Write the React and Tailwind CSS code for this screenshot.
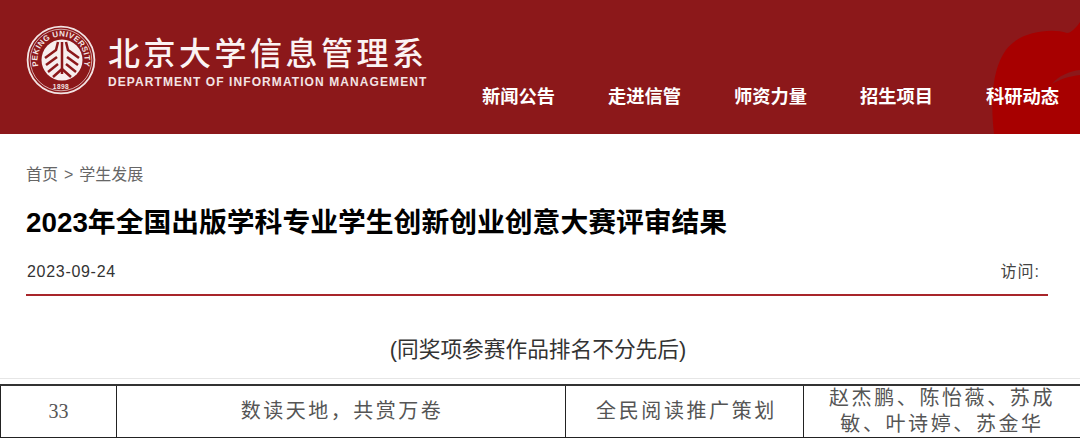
import React from 'react';

const cjk = { fontFamily: '"Liberation Sans", "Noto Sans CJK SC", sans-serif' };
const tableFont = { fontFamily: '"Liberation Serif", "Noto Sans CJK SC", serif' };

const navItems = ['新闻公告', '走进信管', '师资力量', '招生项目', '科研动态'];

function Seal() {
  return (
    <svg width="70" height="70" viewBox="0 0 70 70" className="shrink-0">
      <defs>
        <path id="sealTop" d="M 14.65 46.75 A 23.5 23.5 0 1 1 55.35 46.75" />
      </defs>
      <circle cx="35" cy="35" r="33.4" fill="none" stroke="#f3e4e4" strokeWidth="1.8" />
      <circle cx="35" cy="35" r="30.8" fill="none" stroke="#f3e4e4" strokeWidth="0.7" />
      <circle cx="36" cy="35" r="20.5" fill="#f7eeee" />
      <text fill="#f3e4e4" fontSize="8" fontWeight="700" letterSpacing="0.3" fontFamily="Liberation Sans, sans-serif">
        <textPath href="#sealTop" startOffset="50%" textAnchor="middle">PEKING UNIVERSITY</textPath>
      </text>
      <text x="35" y="64" textAnchor="middle" fill="#f3e4e4" fontSize="6.6" fontWeight="700" letterSpacing="0.4" fontFamily="Liberation Sans, sans-serif">1898</text>
      <g stroke="#8c181a" strokeWidth="2.5" fill="none">
        <path d="M36 17 V49" />
        <path d="M32 17 L30 25 L19 33" />
        <path d="M40 17 L42 25 L53 33" />
        <path d="M31 32 L20 40" />
        <path d="M41 32 L52 40" />
        <path d="M32 39 L22 47" />
        <path d="M40 39 L50 47" />
        <path d="M27 52 L36 44 L45 52" />
      </g>
    </svg>
  );
}

export default function App() {
  return (
    <div className="w-[1080px] h-[438px] overflow-hidden bg-white" style={cjk}>
      {/* Header */}
      <header className="relative h-[134px] bg-[#8c181a] flex overflow-hidden">
        <svg width="90" height="134" viewBox="0 0 90 134" className="absolute right-0 top-0">
          <path d="M4 134 C0 100 2 58 24 42 C36 32 62 28 77 33 C81 33 86 28 90 22 V134 Z" fill="#a70000" />
          <path d="M62 84 C68 76 80 71 90 70 L90 75 C80 76 70 79 62 84 Z" fill="#8c181a" />
        </svg>

        <div className="pl-[26px] pt-[25px] shrink-0">
          <Seal />
        </div>
        <div className="pl-[12px] pt-[36px] w-[341px] shrink-0">
          <div className="text-[32px] leading-[36px] tracking-[3.5px] font-medium text-[#fbf3f3] whitespace-nowrap">北京大学信息管理系</div>
          <div className="text-[12px] leading-[14px] mt-[3px] font-bold tracking-[1.09px] text-[#f3e4e4] whitespace-nowrap">DEPARTMENT OF INFORMATION MANAGEMENT</div>
        </div>
        <nav className="relative flex gap-[53px] pl-[45px] pt-[85px]">
          {navItems.map((item) => (
            <a key={item} className="text-[18.25px] leading-[24px] font-bold text-white whitespace-nowrap">{item}</a>
          ))}
        </nav>
      </header>

      {/* Article head */}
      <div className="pl-[26px] pr-[32px]">
        <div className="pt-[31px] text-[16px] leading-[20px] text-[#666666] flex">
          <span>首页</span>
          <span className="px-[6px]">&gt;</span>
          <span>学生发展</span>
        </div>
        <h1 className="mt-[20px] text-[27.8px] leading-[36px] font-bold text-black whitespace-nowrap">2023年全国出版学科专业学生创新创业创意大赛评审结果</h1>
        <div className="mt-[21px] flex justify-between pb-[12px] border-b-2 border-[#a8252a]">
          <span className="pl-[1px] text-[16px] leading-[20px] text-[#333333] tracking-[0.7px]">2023-09-24</span>
          <span className="text-[16px] leading-[20px] text-[#444444] tracking-[1px] pr-[8px]">访问:</span>
        </div>
      </div>

      <p className="mt-[40px] pr-[4px] text-center text-[21.7px] leading-[28px] text-[#333333]">(同奖项参赛作品排名不分先后)</p>

      <div className="mt-[14px] border-t border-[#e6e6e6] pt-[5px]">
        <table className="w-[1080px] table-fixed border-collapse border-t-2 border-[#333333] text-[#555555] text-[20px] leading-[25.5px]" style={tableFont}>
          <colgroup>
            <col className="w-[116px]" />
            <col className="w-[449px]" />
            <col className="w-[238px]" />
            <col className="w-[277px]" />
          </colgroup>
          <tbody>
            <tr className="h-[52px] text-center">
              <td className="border border-[#222222]">33</td>
              <td className="border border-[#222222] tracking-[2.5px] pl-[2px]">数读天地，共赏万卷</td>
              <td className="border border-[#222222] tracking-[2.6px] pl-[4px]">全民阅读推广策划</td>
              <td className="border border-[#222222] tracking-[2.6px] px-[22px]">赵杰鹏、陈怡薇、苏成敏、叶诗婷、苏金华</td>
            </tr>
          </tbody>
        </table>
      </div>
    </div>
  );
}
